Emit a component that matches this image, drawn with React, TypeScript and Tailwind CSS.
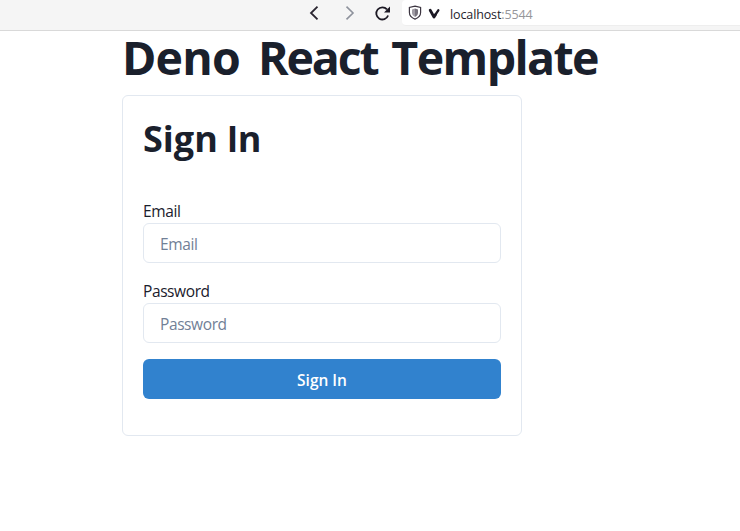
function BrowserBar() {
  return (
    <header className="flex h-[31px] items-start border-b border-[#d9d9d9] bg-[#f5f5f5] pl-[304px]">
      <div className="flex h-[26px] shrink-0 items-center">
        <svg className="h-[20px] w-[20px]" viewBox="0 0 20 20" fill="none" stroke="#2a2530" strokeWidth="1.8">
          <path d="M13.500 3.600 7 10l6.500 6.400" />
        </svg>
        <svg className="ml-[16px] h-[20px] w-[20px]" viewBox="0 0 20 20" fill="none" stroke="#8e929c" strokeWidth="1.600">
          <path d="m6.500 3.600 6.500 6.400-6.500 6.400" />
        </svg>
        <svg className="ml-[12px] h-[20px] w-[20px]" viewBox="0 0 20 20" fill="none">
          <path d="M15 6.400A6.100 6.100 0 1 0 16.100 12.500" stroke="#1c1924" strokeWidth="1.800" />
          <path d="M18 3.400v6h-6z" fill="#1c1924" />
        </svg>
      </div>
      <div className="ml-[10px] flex h-[26px] flex-1 items-center rounded-l-[4px] border-b border-[#eeeeee] bg-white pl-[6px]">
        <svg className="mt-[1px] h-[16px] w-[14px]" viewBox="0 0 14 16" fill="none">
          <path d="M7 1.200 12.600 2.500v5c0 3.200-2.200 5.300-5.600 6.600-3.400-1.300-5.600-3.400-5.600-6.600v-5z" stroke="#3c3541" strokeWidth="1.200" />
          <path d="M7 3.500 4 4.400v3.400c0 1.900 1 3.100 3 4.200z" fill="#a19da5" />
          <path d="M7 3.500 10 4.400v3.400c0 1.900-1 3.100-3 4.200z" fill="#77727c" />
        </svg>
        <svg className="mt-[2px] ml-[6px] h-[12px] w-[13px]" viewBox="0 0 13 12" fill="none" stroke="#1c1924" strokeLinecap="round" strokeLinejoin="round" strokeWidth="2.800">
          <path d="M2.200 2.300 6 9 7.400 6.700" />
          <path d="m7.400 6.700 2.900-4.400" strokeWidth="2.400" />
        </svg>
        <span className="mt-[5px] ml-[9px] text-[12.500px] leading-4 tracking-[-0.12px] whitespace-nowrap text-[#25222c]">
          localhost<span className="text-[#96969a]">:5544</span>
        </span>
      </div>
    </header>
  );
}

function Field({ label, type }: { label: string; type: string }) {
  return (
    <label className="block text-[15.5px] leading-6 tracking-[-0.4px] text-[#1a202c]">
      <span className="block">{label}</span>
      <input
        type={type}
        placeholder={label}
        className="block h-10 w-full rounded-md border border-[#e2e8f0] bg-white px-4 pt-[2px] placeholder:text-[#718096] placeholder:opacity-100"
      />
    </label>
  );
}

export default function App() {
  return (
    <div className="min-h-screen bg-white font-['Open_Sans','Noto_Sans',sans-serif] text-[#1a202c]">
      <BrowserBar />
      <main className="pl-[122px]">
        <h1 className="h-16 text-[46.5px] leading-[52px] font-bold tracking-[-1.6px] whitespace-nowrap [word-spacing:5.5px]">
          <span className="mr-[2px] tracking-[-0.8px]">Deno</span> <span className="-mr-[2px] tracking-[-2.2px]">React</span> Template
        </h1>
        <form className="h-[341px] w-[400px] rounded-md border border-[#e2e8f0] px-5 pt-5">
          <h2 className="h-[83px] text-[36px] leading-[46px] font-bold whitespace-nowrap">
            Sign <span className="font-['Roboto']">I</span>n
          </h2>
          <div className="flex flex-col gap-4">
            <Field label="Email" type="email" />
            <Field label="Password" type="password" />
            <button type="button" className="h-10 w-full rounded-md bg-[#3182ce] pt-[3px] text-[15.5px] font-semibold text-white">
              Sign In
            </button>
          </div>
        </form>
      </main>
    </div>
  );
}
